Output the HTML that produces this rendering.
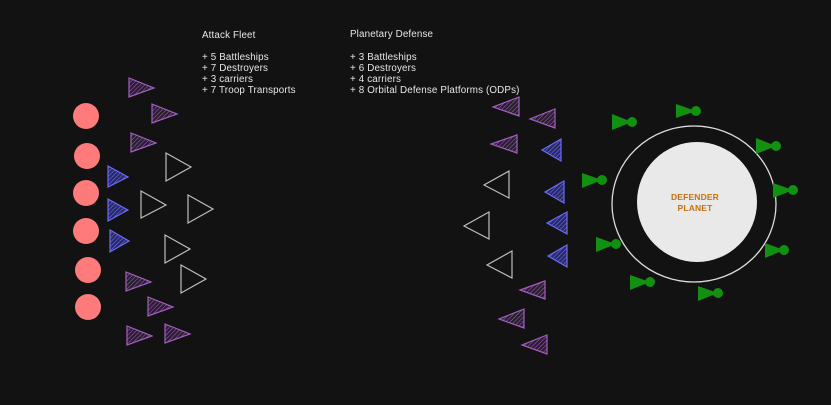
<!DOCTYPE html><html><head><style>html,body{margin:0;background:#121212;}svg{display:block}text{font-family:"Liberation Sans",sans-serif;fill:#e6e6e6;font-size:9.8px;letter-spacing:0.15px}</style></head><body>
<svg width="831" height="405" viewBox="0 0 831 405" xmlns="http://www.w3.org/2000/svg">
<defs>
<pattern id="hp" width="3" height="3" patternUnits="userSpaceOnUse" patternTransform="rotate(45)"><rect width="3" height="3" fill="#2a1f30"/><line x1="0" y1="0" x2="0" y2="3" stroke="#a35fc0" stroke-width="1"/></pattern>
<pattern id="hb" width="3" height="3" patternUnits="userSpaceOnUse" patternTransform="rotate(45)"><rect width="3" height="3" fill="#2a2a5a"/><line x1="0" y1="0" x2="0" y2="3" stroke="#6a6aff" stroke-width="1.2"/></pattern>
</defs>
<rect width="831" height="405" fill="#121212"/>
<text x="202" y="38">Attack Fleet</text>
<text x="202" y="60">+ 5 Battleships</text>
<text x="202" y="71">+ 7 Destroyers</text>
<text x="202" y="82">+ 3 carriers</text>
<text x="202" y="93">+ 7 Troop Transports</text>
<text x="350" y="37">Planetary Defense</text>
<text x="350" y="60">+ 3 Battleships</text>
<text x="350" y="71">+ 6 Destroyers</text>
<text x="350" y="82">+ 4 carriers</text>
<text x="350" y="93">+ 8 Orbital Defense Platforms (ODPs)</text>
<g fill="#ff7a7a">
<circle cx="86" cy="116" r="13"/><circle cx="87" cy="156" r="13"/><circle cx="86" cy="193" r="13"/><circle cx="86" cy="231" r="13"/><circle cx="88" cy="270" r="13"/><circle cx="88" cy="307" r="13"/></g>
<g fill="url(#hp)" stroke="#a35fc0" stroke-width="1.2">
<path d="M129 78L154 88L129 97Z"/><path d="M152 104L177 114L152 123Z"/><path d="M131 133L156 143L131 152Z"/><path d="M126 272L151 282L126 291Z"/><path d="M148 297L173 307L148 316Z"/><path d="M127 326L152 336L127 345Z"/><path d="M165 324L190 334L165 343Z"/>
<path d="M519 97L493 107L519 116Z"/><path d="M555 109L530 119L555 128Z"/><path d="M517 135L491 144L517 153Z"/><path d="M545 281L520 290L545 299Z"/><path d="M524 309L499 319L524 328Z"/><path d="M547 335L522 345L547 354Z"/></g>
<g fill="url(#hb)" stroke="#6a6aff" stroke-width="1.2">
<path d="M108 166L128 177L108 187Z"/><path d="M108 199L128 210L108 221Z"/><path d="M110 230L129 241L110 252Z"/>
<path d="M561 139L542 150L561 161Z"/><path d="M564 181L545 192L564 203Z"/><path d="M567 212L547 223L567 234Z"/><path d="M567 245L548 256L567 267Z"/></g>
<g fill="none" stroke="#bdbdbd" stroke-width="1.2">
<path d="M166 153L191 167L166 181Z"/><path d="M141 191L166 205L141 218Z"/><path d="M188 195L213 209L188 223Z"/><path d="M165 235L190 249L165 263Z"/><path d="M181 265L206 279L181 293Z"/>
<path d="M509 171L484 185L509 198Z"/><path d="M489 212L464 226L489 239Z"/><path d="M512 251L487 265L512 278Z"/></g>
<ellipse cx="694" cy="204" rx="82" ry="78" fill="none" stroke="#dcdcdc" stroke-width="1.3"/>
<circle cx="697" cy="202" r="60" fill="#e9e9e9"/>
<text x="695" y="200" text-anchor="middle" style="fill:#c8700f;font-size:8.5px;font-weight:bold">DEFENDER</text>
<text x="695" y="211" text-anchor="middle" style="fill:#c8700f;font-size:8.5px;font-weight:bold">PLANET</text>
<g fill="#119011">
<path d="M612 114L632 122L612 130Z"/><circle cx="632" cy="122" r="5"/>
<path d="M676 104L696 111L676 118Z"/><circle cx="696" cy="111" r="5"/>
<path d="M756 138L776 146L756 154Z"/><circle cx="776" cy="146" r="5"/>
<path d="M582 173L602 180L582 188Z"/><circle cx="602" cy="180" r="5"/>
<path d="M773 183L793 190L773 198Z"/><circle cx="793" cy="190" r="5"/>
<path d="M596 237L616 244L596 252Z"/><circle cx="616" cy="244" r="5"/>
<path d="M765 243L784 250L765 258Z"/><circle cx="784" cy="250" r="5"/>
<path d="M630 275L650 282L630 290Z"/><circle cx="650" cy="282" r="5"/>
<path d="M698 286L718 293L698 301Z"/><circle cx="718" cy="293" r="5"/>
</g>
</svg></body></html>
